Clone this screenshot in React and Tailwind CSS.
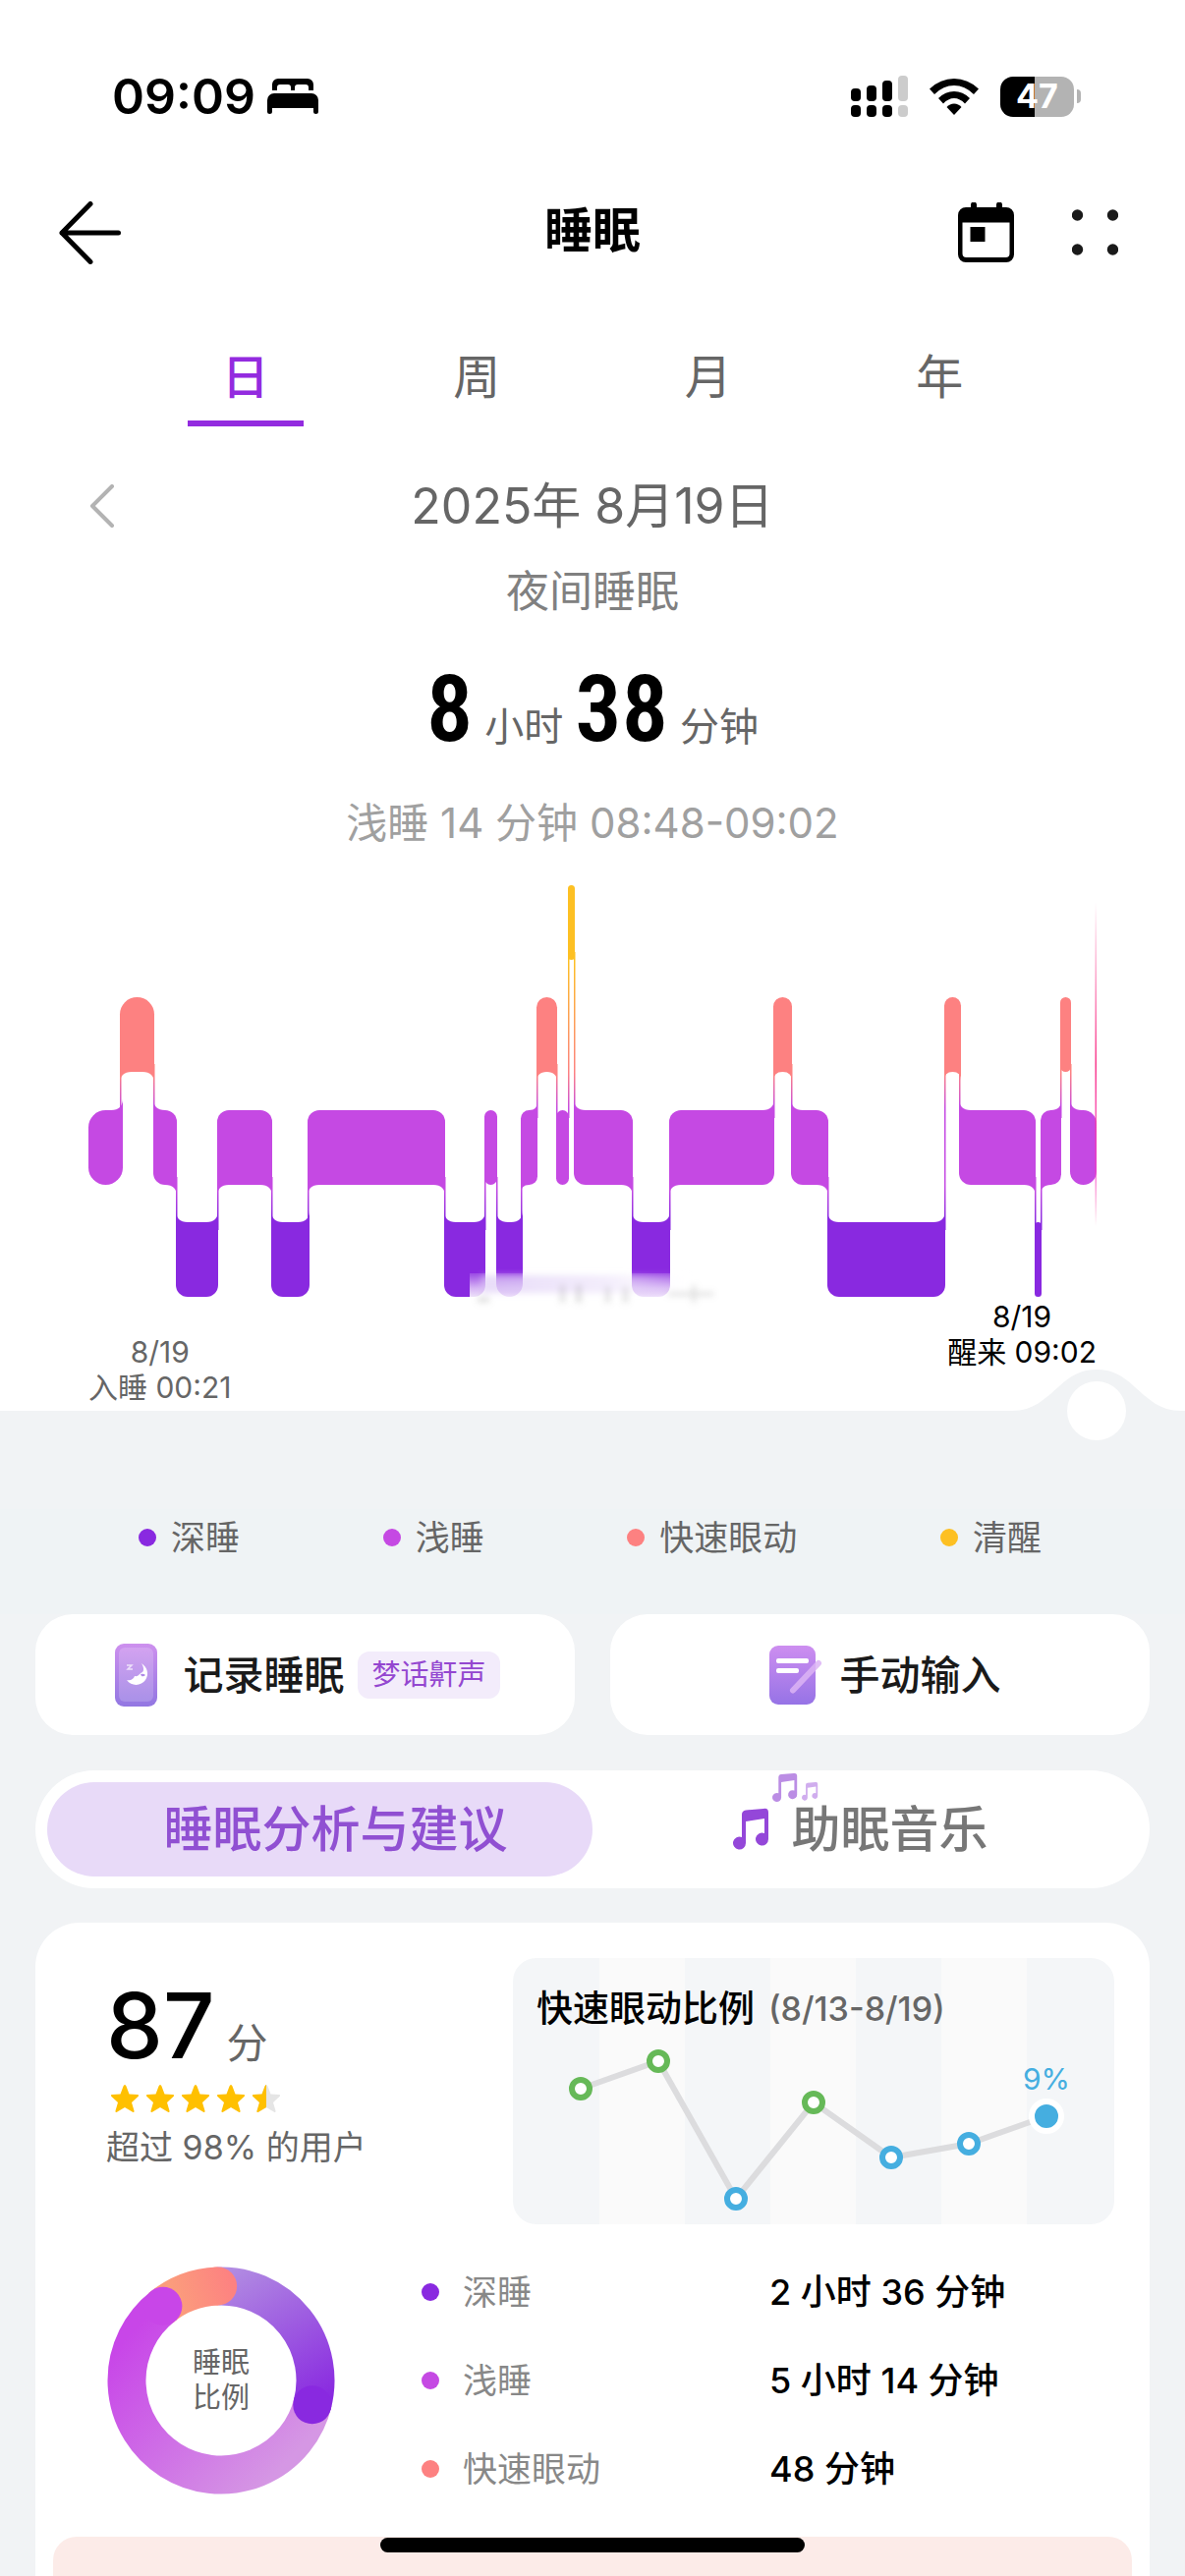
import { useState } from "react";

const STAGES = {
  deep: { label: "深睡", color: "#8929e0", top: 1244 },
  light: { label: "浅睡", color: "#c549e3", top: 1130 },
  rem: { label: "快速眼动", color: "#fd8181", top: 1015 },
  awake: { label: "清醒", color: "#fdc023", top: 901 },
};

const BAR_HEIGHT = 76;

// [stage, start, end]
const SEGMENTS = [
  ["light", 90, 125],
  ["rem", 122, 157],
  ["light", 156, 180],
  ["deep", 179, 222],
  ["light", 221, 277],
  ["deep", 276, 315],
  ["light", 313, 453],
  ["deep", 452, 494],
  ["light", 493, 506],
  ["deep", 505, 532],
  ["light", 530, 547],
  ["rem", 546, 567],
  ["light", 566, 579],
  ["awake", 578, 585],
  ["light", 584, 644],
  ["deep", 643, 682],
  ["light", 681, 788],
  ["rem", 787, 806],
  ["light", 805, 843],
  ["deep", 842, 962],
  ["rem", 961, 978],
  ["light", 976, 1054],
  ["deep", 1053, 1060],
  ["light", 1059, 1080],
  ["rem", 1079, 1090],
  ["light", 1089, 1116],
];

const LEGEND = [
  { stage: "deep", dot: "bg-[#8929e0]" },
  { stage: "light", dot: "bg-[#c549e3]" },
  { stage: "rem", dot: "bg-[#fd8181]" },
  { stage: "awake", dot: "bg-[#fdc023]" },
];

const DURATIONS = [
  { label: "深睡", value: "2 小时 36 分钟", dot: "bg-[#8929e0]" },
  { label: "浅睡", value: "5 小时 14 分钟", dot: "bg-[#c549e3]" },
  { label: "快速眼动", value: "48 分钟", dot: "bg-[#fd8181]" },
];

const GREEN = "#66b958";
const BLUE = "#45aee0";

const REM_POINTS = [
  { x: 69, y: 133, color: GREEN },
  { x: 148, y: 105, color: GREEN },
  { x: 227, y: 245, color: BLUE },
  { x: 306, y: 147, color: GREEN },
  { x: 385, y: 203, color: BLUE },
  { x: 464, y: 189, color: BLUE },
  { x: 543, y: 161, color: BLUE },
];

function StatusBar() {
  return (
    <div className="flex h-[60px] items-center justify-between pr-[106px] pl-[114px]">
      <div className="flex items-center gap-3">
        <span className="text-[50px] leading-[60px] font-semibold">09:09</span>
        <svg className="h-[36px] w-[52px]" viewBox="0 0 52 36">
          <path d="M5 12V6a6 6 0 0 1 6-6h30a6 6 0 0 1 6 6v6h-5V9q0-3-3-3H31q-3 0-3 3v3h-4V9q0-3-3-3h-8q-3 0-3 3v3zM0 22a7 7 0 0 1 7-7h38a7 7 0 0 1 7 7v12q0 2-2.500 2T47 34v-4H5v4q0 2-2.500 2T0 34z" />
        </svg>
      </div>
      <div className="flex items-center gap-[22px]">
        <svg className="h-[42px] w-[58px]" viewBox="0 0 58 42">
          <g>
            <rect x="0" y="13" width="10" height="13" rx="4" />
            <rect x="16" y="10" width="10" height="16" rx="4" />
            <rect x="32" y="5" width="10" height="21" rx="4" />
            <rect x="0" y="30" width="10" height="12" rx="4" />
            <rect x="16" y="30" width="10" height="12" rx="4" />
            <rect x="32" y="30" width="10" height="12" rx="4" />
          </g>
          <g fill="#cccccc">
            <rect x="48" y="0" width="10" height="26" rx="4" />
            <rect x="48" y="30" width="10" height="12" rx="4" />
          </g>
        </svg>
        <svg className="h-[38px] w-[50px]" viewBox="0 0 50 38">
          <path d="M0 11.500Q11 1 25 1t25 10.500l-5 5.500Q36 8 25 8T5 17z" />
          <path d="M9 21q7-7 16-7t16 7l-5 5.500Q31 21 25 21t-11 5.500z" />
          <path d="M17.500 30q3-3.500 7.500-3.500t7.500 3.500L25 38z" />
        </svg>
        <div className="flex items-center gap-[3px]">
          <div className="flex h-[41px] w-[75px] items-center justify-center rounded-[13px] bg-[linear-gradient(90deg,#000_47%,#b3b3b3_47%)] text-[34px] leading-none font-bold text-white">
            47
          </div>
          <div className="h-[14px] w-[4px] rounded-r-full bg-[#b3b3b3]" />
        </div>
      </div>
    </div>
  );
}

function Header() {
  return (
    <header className="mt-[71px] grid h-[75px] grid-cols-[1fr_auto_1fr] items-center px-[60px]">
      <button className="justify-self-start" aria-label="返回">
        <svg
          className="h-[64px] w-[64px]"
          viewBox="0 0 64 64"
          fill="none"
          stroke="#000"
          strokeWidth="5"
          strokeLinecap="round"
          strokeLinejoin="round"
        >
          <path d="M60.500 32H3M32 2.500 3 32l29 29.500" />
        </svg>
      </button>
      <h1 className="pb-1 text-[49px] leading-[60px] font-bold">睡眠</h1>
      <div className="flex items-center gap-[59px] justify-self-end pr-2">
        <button aria-label="日历">
          <svg className="h-[61px] w-[57px]" viewBox="0 0 57 61">
            <path
              fillRule="evenodd"
              d="M8 5h5V2.500a2.500 2.500 0 0 1 6 0V5h20V2.500a2.500 2.500 0 0 1 6 0V5h4a8 8 0 0 1 8 8v40a8 8 0 0 1-8 8H8a8 8 0 0 1-8-8V13a8 8 0 0 1 8-8zM4.500 20.500V52a4 4 0 0 0 4 4h40a4 4 0 0 0 4-4V20.500zM12.500 25h15v15h-15z"
            />
          </svg>
        </button>
        <button aria-label="更多">
          <svg className="h-[47px] w-[47px]" viewBox="0 0 47 47" fill="#1a1a1a">
            <circle cx="5.500" cy="6" r="5.700" />
            <circle cx="41.500" cy="6" r="5.700" />
            <circle cx="5.500" cy="41" r="5.700" />
            <circle cx="41.500" cy="41" r="5.700" />
          </svg>
        </button>
      </div>
    </header>
  );
}

function RangeTabs() {
  const [active, setActive] = useState("日");

  return (
    <nav className="mx-[132px] mt-[76px] grid grid-cols-4 justify-items-center">
      {["日", "周", "月", "年"].map((name) => (
        <button
          key={name}
          onClick={() => setActive(name)}
          className={
            name === active
              ? "w-[118px] border-b-6 border-[#932bdf] pb-[10px] text-[48px] leading-[68px] font-medium text-[#932bdf]"
              : "w-[118px] border-b-6 border-transparent pb-[10px] text-[48px] leading-[68px] text-[#666]"
          }
        >
          {name}
        </button>
      ))}
    </nav>
  );
}

function Bar({ index }) {
  const [stage, x1, x2] = SEGMENTS[index];
  const { top, color } = STAGES[stage];
  const bottom = top + BAR_HEIGHT;
  const width = x2 - x1;
  const r = width <= 36 ? width / 2 : 12;
  const narrow = width < 16;
  const prev = SEGMENTS[index - 1];
  const next = SEGMENTS[index + 1];
  const prevTop = prev ? STAGES[prev[0]].top : top;
  const nextTop = next ? STAGES[next[0]].top : top;

  // a corner stays square where the line to the neighbouring bar leaves it
  const tl = prevTop < top && !narrow ? 0 : r;
  const tr = nextTop < top && !narrow ? 0 : r;
  const bl = prevTop > top && !narrow ? 0 : r;
  const br = nextTop > top && !narrow ? 0 : r;
  const f = Math.min(12, width / 2);

  const body = `M${x1 + tl} ${top}H${x2 - tr}a${tr} ${tr} 0 0 1 ${tr} ${tr}V${
    bottom - br
  }a${br} ${br} 0 0 1 ${-br} ${br}H${x1 + bl}a${bl} ${bl} 0 0 1 ${-bl} ${-bl}V${
    top + tl
  }a${tl} ${tl} 0 0 1 ${tl} ${-tl}z`;

  return (
    <g fill={color}>
      <path d={body} />
      {tl === 0 && <path d={`M${x1} ${top}v${-f}q0 ${f} ${f} ${f}z`} />}
      {tr === 0 && <path d={`M${x2} ${top}v${-f}q0 ${f} ${-f} ${f}z`} />}
      {bl === 0 && <path d={`M${x1} ${bottom}v${f}q0 ${-f} ${f} ${-f}z`} />}
      {br === 0 && <path d={`M${x2} ${bottom}v${f}q0 ${-f} ${-f} ${-f}z`} />}
    </g>
  );
}

function SleepChart() {
  return (
    <svg
      className="mt-[39px] w-full overflow-visible"
      viewBox="90 901 1026 421"
      role="img"
      aria-label="夜间睡眠阶段"
    >
      <defs>
        <linearGradient
          id="stageLine"
          gradientUnits="userSpaceOnUse"
          x1="0"
          x2="0"
          y1="977"
          y2="1244"
        >
          <stop offset="0" stopColor="#fdc023" />
          <stop offset="0.430" stopColor="#fd8181" />
          <stop offset="0.570" stopColor="#c549e3" />
          <stop offset="0.860" stopColor="#c549e3" />
          <stop offset="1" stopColor="#8929e0" />
        </linearGradient>
        <linearGradient id="cursor" x1="0" x2="0" y1="0" y2="1">
          <stop offset="0" stopColor="#f93a8c" stopOpacity="0" />
          <stop offset="0.500" stopColor="#f93a8c" />
          <stop offset="0.850" stopColor="#f93ac0" stopOpacity="0.600" />
          <stop offset="1" stopColor="#f93a8c" stopOpacity="0" />
        </linearGradient>
        <linearGradient id="fade" x1="0" x2="0" y1="0" y2="1">
          <stop offset="0" stopColor="#fff" stopOpacity="0.150" />
          <stop offset="0.500" stopColor="#fff" stopOpacity="0.650" />
          <stop offset="1" stopColor="#fff" />
        </linearGradient>
        <linearGradient id="wash" x1="0" x2="1" y1="0" y2="0">
          <stop offset="0" stopColor="#d9c4f4" />
          <stop offset="0.600" stopColor="#ece2fa" />
          <stop offset="1" stopColor="#f8f5fd" stopOpacity="0" />
        </linearGradient>
        <filter id="soft" x="-20%" y="-60%" width="140%" height="220%">
          <feGaussianBlur stdDeviation="3" />
        </filter>
      </defs>
      {SEGMENTS.slice(1).map(([stage, x], i) => {
        const a = STAGES[SEGMENTS[i][0]].top;
        const b = STAGES[stage].top;
        const y1 = Math.min(a, b) + BAR_HEIGHT - 8;
        const y2 = Math.max(a, b) + 8;
        return (
          <rect
            key={x}
            x={x}
            y={y1}
            width="1.500"
            height={y2 - y1}
            fill="url(#stageLine)"
          />
        );
      })}
      {SEGMENTS.map(([, x], i) => (
        <Bar key={x} index={i} />
      ))}
      <rect x="1114.500" y="918" width="1.500" height="330" fill="url(#cursor)" />
      <rect x="478" y="1296" width="212" height="30" fill="url(#fade)" />
      <g filter="url(#soft)">
        <rect
          x="490"
          y="1298"
          width="215"
          height="18"
          fill="url(#wash)"
          opacity="0.600"
        />
        <g fill="#9a9a9a" opacity="0.300">
          <rect x="486" y="1320" width="12" height="6" />
          <rect x="570" y="1308" width="5" height="18" />
          <rect x="586" y="1308" width="6" height="18" />
          <rect x="616" y="1310" width="5" height="16" />
          <rect x="634" y="1310" width="5" height="16" />
          <rect x="680" y="1315" width="46" height="4" />
          <rect x="704" y="1308" width="4" height="18" />
        </g>
      </g>
    </svg>
  );
}

function TimeScrubber() {
  const [value, setValue] = useState(100);

  return (
    <>
      <div className="absolute inset-x-[90px] bottom-0">
        <svg
          className="absolute bottom-0 h-[42px] w-[172px] -translate-x-1/2"
          style={{ left: `${value}%` }}
          viewBox="0 0 172 42"
          fill="#f1f3f5"
        >
          <path d="M0 42C22 42 33 30 48 17 60 6 70 0 86 0s26 6 38 17c15 13 26 25 48 25z" />
        </svg>
      </div>
      <input
        type="range"
        aria-label="时间"
        value={value}
        onChange={(e) => setValue(Number(e.target.value))}
        className="absolute inset-x-[60px] -bottom-[30px] h-[60px] appearance-none bg-transparent [&::-webkit-slider-thumb]:size-[60px] [&::-webkit-slider-thumb]:appearance-none [&::-webkit-slider-thumb]:rounded-full [&::-webkit-slider-thumb]:bg-white"
      />
    </>
  );
}

function Legend() {
  return (
    <ul className="mt-[100px] flex h-[107px] justify-between bg-[#eff3f5] pr-[146px] pl-[141px] text-[35px] leading-[58px] text-[#666]">
      {LEGEND.map(({ stage, dot }) => (
        <li key={stage} className="flex h-[58px] items-center gap-[15px]">
          <span className={`size-[18px] rounded-full ${dot}`} />
          {STAGES[stage].label}
        </li>
      ))}
    </ul>
  );
}

function PhoneIcon() {
  return (
    <svg className="h-[64px] w-[60px]" viewBox="0 0 60 64">
      <defs>
        <linearGradient id="phone" x1="0" x2="0" y1="0" y2="1">
          <stop offset="0" stopColor="#cd90ee" />
          <stop offset="1" stopColor="#9277e2" />
        </linearGradient>
      </defs>
      <rect x="5" width="43" height="64" rx="9" fill="url(#phone)" />
      <rect
        x="9"
        y="4"
        width="35"
        height="55"
        rx="6"
        fill="#fff"
        fillOpacity="0.180"
      />
      <path
        d="M32 20c6 4 8 11 4 17s-14 7-19 0c4 1 7-1 8-4 4 1 5-3 8-4 2-2 1-6-1-9z"
        fill="#fff"
      />
      <path
        d="M17 22h5l-4 4h5"
        fill="none"
        stroke="#fff"
        strokeOpacity="0.700"
        strokeWidth="1.500"
      />
      <path d="M31 31q3-1 5 1-2 2-4 1z" fill="#b08ae8" />
    </svg>
  );
}

function NoteIcon() {
  return (
    <svg className="h-[60px] w-[72px]" viewBox="0 0 72 60">
      <defs>
        <linearGradient id="note" x1="0" x2="0" y1="0" y2="1">
          <stop offset="0" stopColor="#cd8ef0" />
          <stop offset="1" stopColor="#9673e6" />
        </linearGradient>
      </defs>
      <rect x="14" width="47" height="60" rx="9" fill="url(#note)" />
      <rect x="21" y="13" width="33" height="5" rx="2" fill="#fff" />
      <rect x="21" y="23" width="23" height="5" rx="2" fill="#fff" />
      <path
        d="M38 45.500 64 18"
        stroke="#dcb4f5"
        strokeOpacity="0.850"
        strokeWidth="6"
        strokeLinecap="round"
      />
    </svg>
  );
}

function Notes({ transform, fill }) {
  return (
    <path
      transform={transform}
      fill={fill}
      d="M9 6q0-4 4-4.500L31 0q5-1 5 4v27a6.500 6.500 0 1 1-4-6V10l-19 3v22a6.500 6.500 0 1 1-4-6z"
    />
  );
}

function MusicIcon() {
  return (
    <svg
      className="h-[42px] w-[60px] overflow-visible"
      viewBox="0 0 60 42"
      aria-hidden="true"
    >
      <Notes fill="#9447d9" />
      <Notes fill="#bb8de4" transform="translate(40 -36) scale(0.700)" />
      <Notes fill="#d0adee" transform="translate(70 -27) scale(0.450)" />
    </svg>
  );
}

function Actions() {
  return (
    <div className="mx-9 grid grid-cols-2 gap-9 text-[41px] leading-[60px] font-medium text-[#1a1a1a]">
      <button className="flex h-[123px] items-center justify-center rounded-[38px] bg-white">
        <PhoneIcon />
        <span className="ml-[14px]">记录睡眠</span>
        <span className="ml-[14px] rounded-xl bg-[#f3ecfb] px-[14px] text-[29px] leading-[48px] font-normal text-[#9447d0]">
          梦话鼾声
        </span>
      </button>
      <button className="flex h-[123px] items-center justify-center rounded-[38px] bg-white pr-1">
        <NoteIcon />
        <span className="ml-[14px]">手动输入</span>
      </button>
    </div>
  );
}

function ContentTabs() {
  return (
    <div className="mx-9 mt-9 grid grid-cols-2 rounded-full bg-white p-3 text-[50px] leading-[96px] font-medium">
      <button className="rounded-full bg-[#e8daf8] pl-8 text-[#9050d2]">
        睡眠分析与建议
      </button>
      <button className="flex items-center justify-center pr-[10px] text-[#777]">
        <MusicIcon />
        助眠音乐
      </button>
    </div>
  );
}

function Star({ half }) {
  const d =
    "M15 0q1 0 1.500 1.500l3 8 8.500.500q2 .500.500 2L22 18l2.500 8.500q.500 2-1.500 1.200L15 23l-8 4.700q-2 .800-1.500-1.200L8 18l-6.500-6q-1.500-1.500.500-2l8.500-.500 3-8Q14 0 15 0z";
  return (
    <svg className="h-[29px] w-[30px]" viewBox="0 0 30 29">
      {half && (
        <clipPath id="halfStar">
          <rect width="15" height="29" />
        </clipPath>
      )}
      {half && <path d={d} fill="#e5e5e5" />}
      <path d={d} fill="#ffc000" clipPath={half ? "url(#halfStar)" : undefined} />
    </svg>
  );
}

function Score() {
  return (
    <div className="pt-[23px]">
      <div className="flex items-baseline gap-3">
        <span className="text-[92px] leading-none font-medium">87</span>
        <span className="text-[42px] leading-none text-[#666]">分</span>
      </div>
      <div className="mt-[14px] flex gap-[6px] pl-1" aria-label="4.5 星">
        <Star />
        <Star />
        <Star />
        <Star />
        <Star half />
      </div>
      <p className="mt-3 text-[34px] leading-[46px] text-[#666]">
        超过 98% 的用户
      </p>
    </div>
  );
}

function RemTrend() {
  return (
    <div className="relative h-[271px] overflow-hidden rounded-3xl bg-[#f4f6f8]">
      <svg
        className="absolute inset-0 size-full"
        viewBox="0 0 612 271"
        preserveAspectRatio="none"
      >
        <g fill="#fafafa">
          <rect x="88" width="87" height="271" />
          <rect x="262" width="87" height="271" />
          <rect x="436" width="87" height="271" />
        </g>
        <polyline
          points={REM_POINTS.map((p) => `${p.x},${p.y}`).join(" ")}
          fill="none"
          stroke="#dcdcde"
          strokeWidth="6"
        />
        {REM_POINTS.slice(0, -1).map((p) => (
          <circle
            key={p.x}
            cx={p.x}
            cy={p.y}
            r="9"
            fill="#fff"
            stroke={p.color}
            strokeWidth="6"
          />
        ))}
        <circle cx="543" cy="161" r="15" fill={BLUE} stroke="#fff" strokeWidth="6" />
        <text x="543" y="134" fontSize="30" textAnchor="middle" fill={BLUE}>
          9%
        </text>
      </svg>
      <h2 className="relative flex items-center gap-[14px] pt-7 pl-6 text-[37px] leading-[48px] font-medium">
        快速眼动比例
        <span className="text-[34px] text-[#666]">(8/13-8/19)</span>
      </h2>
    </div>
  );
}

function polar(deg) {
  const a = (deg * Math.PI) / 180;
  return [116 + 96 * Math.sin(a), 116 - 96 * Math.cos(a)];
}

function arc(from, to) {
  const [x1, y1] = polar(from);
  const [x2, y2] = polar(to);
  return `M${x1} ${y1}A96 96 0 ${to - from > 180 ? 1 : 0} 1 ${x2} ${y2}`;
}

function SleepRing() {
  const [deepX, deepY] = polar(105);
  const [lightX, lightY] = polar(322);
  const [remX, remY] = polar(358);

  return (
    <div className="relative flex size-[232px] items-center justify-center">
      <svg className="absolute inset-0 size-full" viewBox="0 0 232 232" fill="none">
        <defs>
          <linearGradient id="ringDeep" gradientUnits="userSpaceOnUse" x1="116" y1="10" x2="200" y2="150">
            <stop offset="0" stopColor="#b18be2" />
            <stop offset="1" stopColor="#8929e0" />
          </linearGradient>
          <linearGradient id="ringLight" gradientUnits="userSpaceOnUse" x1="210" y1="170" x2="60" y2="30">
            <stop offset="0" stopColor="#d597e4" />
            <stop offset="1" stopColor="#c846e8" />
          </linearGradient>
          <linearGradient id="ringRem" gradientUnits="userSpaceOnUse" x1="70" y1="40" x2="130" y2="20">
            <stop offset="0" stopColor="#fb9d7c" />
            <stop offset="1" stopColor="#fd8181" />
          </linearGradient>
        </defs>
        <path d={arc(103, 322)} stroke="url(#ringLight)" strokeWidth="39" />
        <path d={arc(-2, 105)} stroke="url(#ringDeep)" strokeWidth="39" />
        <circle cx={deepX} cy={deepY} r="19.500" fill="#8929e0" />
        <path d={arc(320, 358)} stroke="url(#ringRem)" strokeWidth="39" />
        <circle cx={remX} cy={remY} r="19.500" fill="url(#ringRem)" />
        <circle cx={lightX} cy={lightY} r="19.500" fill="#c846e8" />
      </svg>
      <p className="w-[58px] text-[29px] leading-[36px] text-[#666]">睡眠比例</p>
    </div>
  );
}

function Durations() {
  return (
    <table className="ml-[88px] text-[35px] leading-[48px]">
      <tbody>
        {DURATIONS.map(({ label, value, dot }) => (
          <tr key={label} className="h-[90px]">
            <th scope="row" className="w-[354px] p-0 text-left font-normal text-[#888]">
              <span className="flex items-center gap-6">
                <span className={`size-[18px] rounded-full ${dot}`} />
                {label}
              </span>
            </th>
            <td className="p-0 text-[36px] font-medium">{value}</td>
          </tr>
        ))}
      </tbody>
    </table>
  );
}

export default function App() {
  return (
    <div className="min-h-screen bg-[#f1f3f5] font-['Inter','Noto_Sans_CJK_SC',sans-serif] text-black">
      <div className="relative bg-white pt-[68px] pb-[6px]">
        <StatusBar />
        <Header />
        <RangeTabs />
        <div className="mt-[51px] grid grid-cols-[1fr_auto_1fr] items-center px-[90px] text-[50px] leading-[60px] text-[#666]">
          <button className="justify-self-start" aria-label="前一天">
            <svg
              className="h-[44px] w-[28px]"
              viewBox="0 0 28 44"
              fill="none"
              stroke="#b3b3b3"
              strokeWidth="4"
              strokeLinecap="round"
              strokeLinejoin="round"
            >
              <path d="M24 2 4 22l20 20" />
            </svg>
          </button>
          <span>2025年 8月19日</span>
        </div>
        <p className="mt-[27px] text-center text-[44px] leading-[60px] text-[#808080]">
          夜间睡眠
        </p>
        <p className="mt-[43px] flex items-baseline justify-center gap-3 text-[40px] leading-none text-[#666]">
          <span className="font-['Roboto_Condensed','Roboto',sans-serif] text-[94px] font-semibold text-black">
            8
          </span>
          小时
          <span className="font-['Roboto_Condensed','Roboto',sans-serif] text-[94px] font-semibold text-black">
            38
          </span>
          分钟
        </p>
        <p className="mt-[45px] text-center text-[42px] leading-[48px] text-[#a0a0a0]">
          浅睡 14 分钟 08:48-09:02
        </p>
        <div className="px-[90px]">
          <SleepChart />
          <div className="flex items-start justify-between text-center text-[30px] leading-[36px]">
            <p className="pt-9 text-[#666]">
              8/19
              <br />
              入睡 00:21
            </p>
            <p>
              8/19
              <br />
              醒来 09:02
            </p>
          </div>
        </div>
        <TimeScrubber />
      </div>

      <Legend />
      <Actions />
      <ContentTabs />

      <section className="mx-9 mt-[35px] rounded-t-[45px] bg-white pt-9">
        <div className="grid grid-cols-[414px_1fr] pr-9 pl-[72px]">
          <Score />
          <RemTrend />
        </div>
        <div className="mt-6 flex items-center pl-[73px]">
          <SleepRing />
          <Durations />
        </div>
        <div className="mx-[18px] mt-6 h-10 rounded-t-3xl bg-[#fcebe8]" />
      </section>

      <div className="fixed bottom-6 left-1/2 h-[15px] w-[432px] -translate-x-1/2 rounded-full bg-black" />
    </div>
  );
}
